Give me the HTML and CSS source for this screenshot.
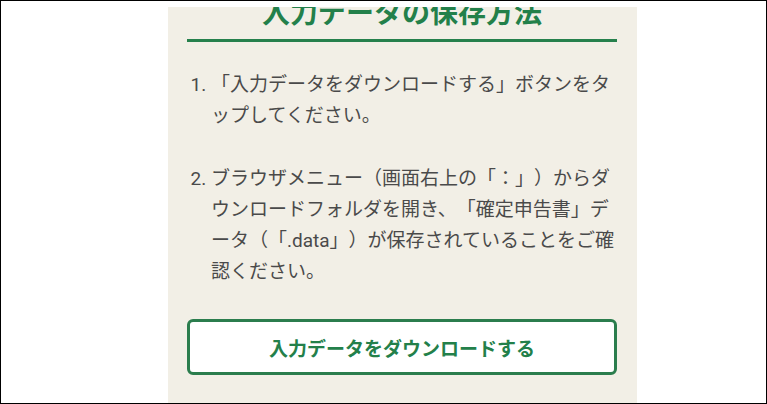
FILE: index.html
```html
<!DOCTYPE html>
<html lang="ja">
<head>
    <meta charset="UTF-8">
    <meta name="viewport" content="width=device-width, initial-scale=1.0">
    <title>入力データの保存方法</title>
    <link rel="stylesheet" href="styles.css">
</head>
<body>
<div class="frame">
    <div class="screen">
        <h2 class="save-title">入力データの保存方法</h2>
        <ol class="steps">
            <li>「入力データをダウンロードする」ボタンをタップしてください。</li>
            <li>ブラウザメニュー（画面右上の「：」）からダウンロードフォルダを開き、「確定申告書」データ（「.data」）が保存されていることをご確認ください。</li>
        </ol>
        <button class="download-btn">入力データをダウンロードする</button>
    </div>
</div>
</body>
</html>
```

FILE: styles.css
```css
html, body {
    margin: 0;
    padding: 0;
    background-color: #fff;
}
.frame {
    width: 767px;
    height: 404px;
    box-sizing: border-box;
    border: 1px solid #000;
    padding: 6px 0 0 167px;
    overflow: hidden;
}
.screen {
    width: 469px;
    height: 397px;
    box-sizing: border-box;
    padding: 0 20px 0 19px;
    background-color: #f2efe6;
    overflow: hidden;
    font-family: Roboto, "Noto Sans CJK JP", sans-serif;
    text-spacing-trim: space-all;
}
.save-title {
    margin: -11px 0 0;
    padding-bottom: 7px;
    font-size: 28px;
    line-height: 36px;
    font-weight: 700;
    text-align: center;
    color: #23804a;
    border-bottom: 3px solid #26804c;
}
.steps {
    margin: 27px 0 32px;
    padding-left: 24px;
    font-size: 19px;
    line-height: 31px;
    color: #4a4a4a;
    line-break: loose;
}
.steps li {
    margin-bottom: 32px;
}
.steps li:last-child {
    margin-bottom: 0;
}
.download-btn {
    display: block;
    width: 100%;
    height: 56px;
    background-color: #fff;
    border: 3px solid #2b7d4d;
    border-radius: 6px;
    font-family: Roboto, "Noto Sans CJK JP", sans-serif;
    font-size: 19px;
    font-weight: 700;
    color: #23804a;
    cursor: pointer;
}
```
